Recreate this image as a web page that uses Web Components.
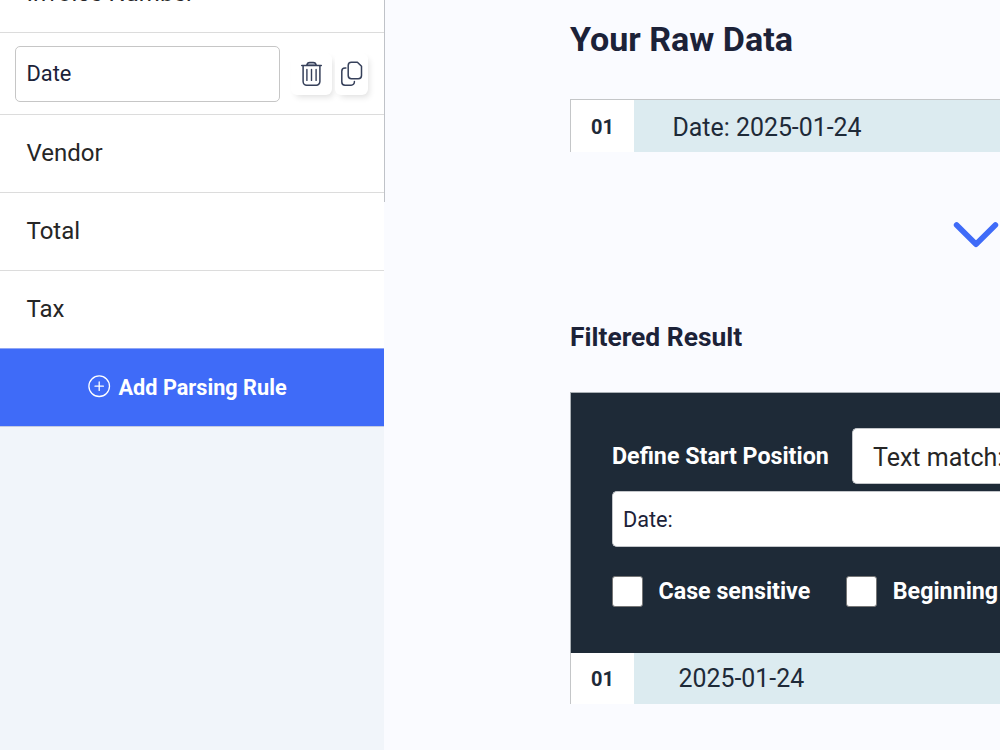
<!DOCTYPE html>
<html lang="en">
<head>
<meta charset="UTF-8">
<title>Parsing Rules</title>
<style>
    * { box-sizing: border-box; }
    body {
        margin: 0;
        width: 1000px;
        height: 750px;
        overflow: hidden;
        background: #fafbff;
        color: #1c2238;
        font-family: Roboto, "Liberation Sans", sans-serif;
    }
</style>
</head>
<body>
<parser-app>
    <rule-sidebar slot="sidebar">
        <rule-item>Invoice Number</rule-item>
        <rule-item editing>Date</rule-item>
        <rule-item>Vendor</rule-item>
        <rule-item>Total</rule-item>
        <rule-item>Tax</rule-item>
        <add-rule-button slot="action">Add Parsing Rule</add-rule-button>
    </rule-sidebar>

    <section-title size="large">Your Raw Data</section-title>
    <data-row number="01" first>Date: 2025-01-24</data-row>
    <step-arrow></step-arrow>
    <section-title>Filtered Result</section-title>
    <filter-panel label="Define Start Position" match="Text match:" value="Date:">
        <check-option>Case sensitive</check-option>
        <check-option>Beginning</check-option>
    </filter-panel>
    <data-row number="01" result>2025-01-24</data-row>
</parser-app>

<script>
// Shared helper: open shadow root with markup + styles
class BaseElement extends HTMLElement {
    constructor() {
        super();
        this.attachShadow({ mode: 'open' });
    }

    connectedCallback() {
        this.shadowRoot.innerHTML = `
            <style>
                * { box-sizing: border-box; }
                ${this.styles()}
            </style>
            ${this.markup()}
        `;
    }

    styles() { return ''; }
    markup() { return '<slot></slot>'; }
}

class ParserApp extends BaseElement {
    styles() {
        return `
            :host {
                display: grid;
                grid-template-columns: 384px 1fr;
                width: 1000px;
                height: 750px;
                overflow: hidden;
            }
            aside {
                display: flex;
                min-width: 0;
                background: #f1f5fa;
            }
            main {
                display: flex;
                flex-direction: column;
                min-width: 0;
                padding: 15px 0 0 186px;
            }
        `;
    }

    markup() {
        return `
            <aside><slot name="sidebar"></slot></aside>
            <main><slot></slot></main>
        `;
    }
}

class RuleSidebar extends BaseElement {
    styles() {
        return `
            :host { display: block; width: 384px; height: 750px; }
            .list {
                display: flex;
                flex-direction: column;
                justify-content: flex-end;
                height: 348px;
                background: #ffffff;
            }
            /* scroll track on the right edge */
            .track {
                position: absolute;
                left: 384px;
                top: 0;
                width: 1px;
                height: 202px;
                background: #bfc2c8;
            }
        `;
    }

    markup() {
        return `
            <div class="list"><slot></slot></div>
            <slot name="action"></slot>
            <div class="track"></div>
        `;
    }
}

class RuleItem extends BaseElement {
    styles() {
        return `
            :host {
                display: flex;
                flex: none;
                align-items: center;
                height: 78px;
                padding: 0 16px 1px 26.5px;
                border-bottom: 1px solid #dcdcdc;
                font-size: 24px;
                line-height: 28px;
                color: #262626;
            }
            /* the button's top border closes the last row */
            :host(:last-of-type) {
                height: 77px;
                border-bottom: 0;
            }
            :host([editing]) {
                height: 82px;
                padding: 0 16px 0 15px;
            }
            .field {
                display: flex;
                align-items: center;
                width: 265px;
                height: 56px;
                padding: 0 0 0 10.5px;
                border: 1px solid #c6c6c6;
                border-radius: 5px;
                background: #ffffff;
                font-size: 21.8px;
                color: #1c2238;
            }
            .field span { padding-top: 1px; }
            .actions {
                display: flex;
                gap: 3px;
                margin-left: 11px;
            }
            .btn {
                display: flex;
                align-items: center;
                justify-content: center;
                width: 41px;
                height: 42px;
                border-radius: 6px;
                background: #ffffff;
                box-shadow: 3px 4px 6px -2px rgba(0, 0, 0, 0.13);
            }
            .btn.copy { width: 33px; }
            svg { display: block; fill: none; stroke: #36405a; stroke-width: 1.5; stroke-linecap: round; stroke-linejoin: round; }
        `;
    }

    markup() {
        if (!this.hasAttribute('editing')) return '<slot></slot>';
        return `
            <div class="field"><span><slot></slot></span></div>
            <div class="actions">
                <div class="btn">
                    <svg width="22" height="26" viewBox="0.5 0 22 26">
                        <path d="M1.2 4.5H20.8M2.6 4.7V20.6a3.6 3.6 0 0 0 3.6 3.6h9.6a3.6 3.6 0 0 0 3.6-3.6V4.7"/>
                        <path fill="#c5cad6" d="M6.3 4.2C6.6 2.4 7.7 1.4 9.3 1.4h3.4c1.6 0 2.7 1 3 2.8z"/>
                        <path d="M6.4 8.4V19.4M11 8.4V19.4M15.6 8.4V19.4" stroke-width="1.4"/>
                    </svg>
                </div>
                <div class="btn copy">
                    <svg width="22" height="26" viewBox="0.5 0 22 26">
                        <path d="M10.9 1.2h6l4.1 4.1v9.2a3.2 3.2 0 0 1-3.2 3.2h-6.9a3.2 3.2 0 0 1-3.2-3.2V4.4a3.2 3.2 0 0 1 3.2-3.2z"/>
                        <path d="M5.4 7.1H4.5a3.2 3.2 0 0 0-3.2 3.2V21a3.2 3.2 0 0 0 3.2 3.2h6.2a3.2 3.2 0 0 0 3.2-3.2v-.6"/>
                    </svg>
                </div>
            </div>
        `;
    }
}

class AddRuleButton extends BaseElement {
    styles() {
        return `
            :host {
                display: flex;
                align-items: center;
                height: 79px;
                padding: 0 0 2px 88px;
                gap: 7.5px;
                border-top: 1px solid #8fa6f5;
                border-bottom: 1px solid #c3cbe2;
                background: #3f6bf8;
                color: #ffffff;
                font-size: 21.7px;
                font-weight: 700;
                line-height: 26px;
            }
            svg { display: block; fill: none; stroke: #ffffff; stroke-width: 1.3; stroke-linecap: round; }
            span { padding-top: 2px; }
        `;
    }

    markup() {
        return `
            <svg width="23" height="23" viewBox="0 0 23 23">
                <circle cx="11.2" cy="11.2" r="10.3"/>
                <path d="M11.2 7v8.4M7 11.2h8.4"/>
            </svg>
            <span><slot></slot></span>
        `;
    }
}

class SectionTitle extends BaseElement {
    styles() {
        return `
            :host {
                display: block;
                height: 32px;
                margin-bottom: 39px;
                font-size: 26.4px;
                font-weight: 700;
                line-height: 32px;
                white-space: nowrap;
            }
            :host([size="large"]) {
                height: 48px;
                margin-bottom: 36px;
                font-size: 34.1px;
                line-height: 48px;
            }
        `;
    }
}

class DataRow extends BaseElement {
    styles() {
        return `
            :host {
                display: flex;
                flex: none;
                height: 51px;
                border-left: 1px solid #c4c6c8;
                color: #1e2a38;
            }
            :host([first]) {
                height: 53px;
                border-top: 1px solid #c4c6c8;
            }
            .number {
                display: flex;
                align-items: center;
                justify-content: center;
                width: 63px;
                background: #ffffff;
                font-size: 20px;
                font-weight: 700;
            }
            .content {
                display: flex;
                flex: 1;
                align-items: center;
                padding-left: 38.5px;
                background: #dcebf0;
                font-size: 24.9px;
                white-space: nowrap;
            }
            :host([first]) .number { padding-top: 2px; }
            :host([first]) .content { padding-top: 2px; }
            :host([result]) .content { padding-left: 44.5px; }
        `;
    }

    markup() {
        return `
            <div class="number">${this.getAttribute('number')}</div>
            <div class="content"><slot></slot></div>
        `;
    }
}

class StepArrow extends BaseElement {
    styles() {
        return `
            :host {
                display: flex;
                flex: none;
                justify-content: flex-end;
                align-items: center;
                height: 169px;
                padding-bottom: 3px;
            }
            svg { display: block; fill: none; stroke: #3f6bf8; stroke-width: 5.6; stroke-linecap: round; stroke-linejoin: round; }
        `;
    }

    markup() {
        return `
            <svg width="48" height="28" viewBox="0 0 48 28">
                <path d="M4.6 3.9L24 23.3L43.4 3.9"/>
            </svg>
        `;
    }
}

class FilterPanel extends BaseElement {
    styles() {
        return `
            :host {
                display: block;
                flex: none;
                height: 261px;
                padding: 35px 0 0 41px;
                border-top: 1px solid #aab0b5;
                border-left: 1px solid #aab0b5;
                background: #1e2a37;
                color: #ffffff;
                overflow: hidden;
            }
            .row { display: flex; align-items: center; }
            .label {
                width: 240px;
                flex: none;
                font-size: 23.25px;
                font-weight: 700;
                white-space: nowrap;
            }
            .select, .input {
                display: flex;
                align-items: center;
                height: 56px;
                border: 1px solid #c3c6ca;
                border-right: 0;
                border-radius: 5px 0 0 5px;
                background: #ffffff;
                white-space: nowrap;
            }
            .select {
                flex: 1;
                min-width: 0;
                padding: 2px 0 0 20px;
                color: #262626;
                font-size: 25px;
            }
            .input {
                margin-top: 7px;
                padding: 0 0 0 10px;
                color: #1c2238;
                font-size: 21.7px;
            }
            .options { gap: 36px; margin-top: 29px; }
        `;
    }

    markup() {
        return `
            <div class="row">
                <div class="label">${this.getAttribute('label')}</div>
                <div class="select">${this.getAttribute('match')}</div>
            </div>
            <div class="input">${this.getAttribute('value')}</div>
            <div class="row options"><slot></slot></div>
        `;
    }
}

class CheckOption extends BaseElement {
    styles() {
        return `
            :host {
                display: flex;
                flex: none;
                align-items: center;
                gap: 15.5px;
                font-size: 23.25px;
                font-weight: 700;
                line-height: 27px;
                white-space: nowrap;
            }
            .box {
                width: 31px;
                height: 31px;
                border: 1px solid #767676;
                border-radius: 3px;
                background: #ffffff;
            }
            .text { padding-bottom: 1px; }
        `;
    }

    markup() {
        return '<span class="box"></span><span class="text"><slot></slot></span>';
    }
}

customElements.define('parser-app', ParserApp);
customElements.define('rule-sidebar', RuleSidebar);
customElements.define('rule-item', RuleItem);
customElements.define('add-rule-button', AddRuleButton);
customElements.define('section-title', SectionTitle);
customElements.define('data-row', DataRow);
customElements.define('step-arrow', StepArrow);
customElements.define('filter-panel', FilterPanel);
customElements.define('check-option', CheckOption);
</script>
</body>
</html>
